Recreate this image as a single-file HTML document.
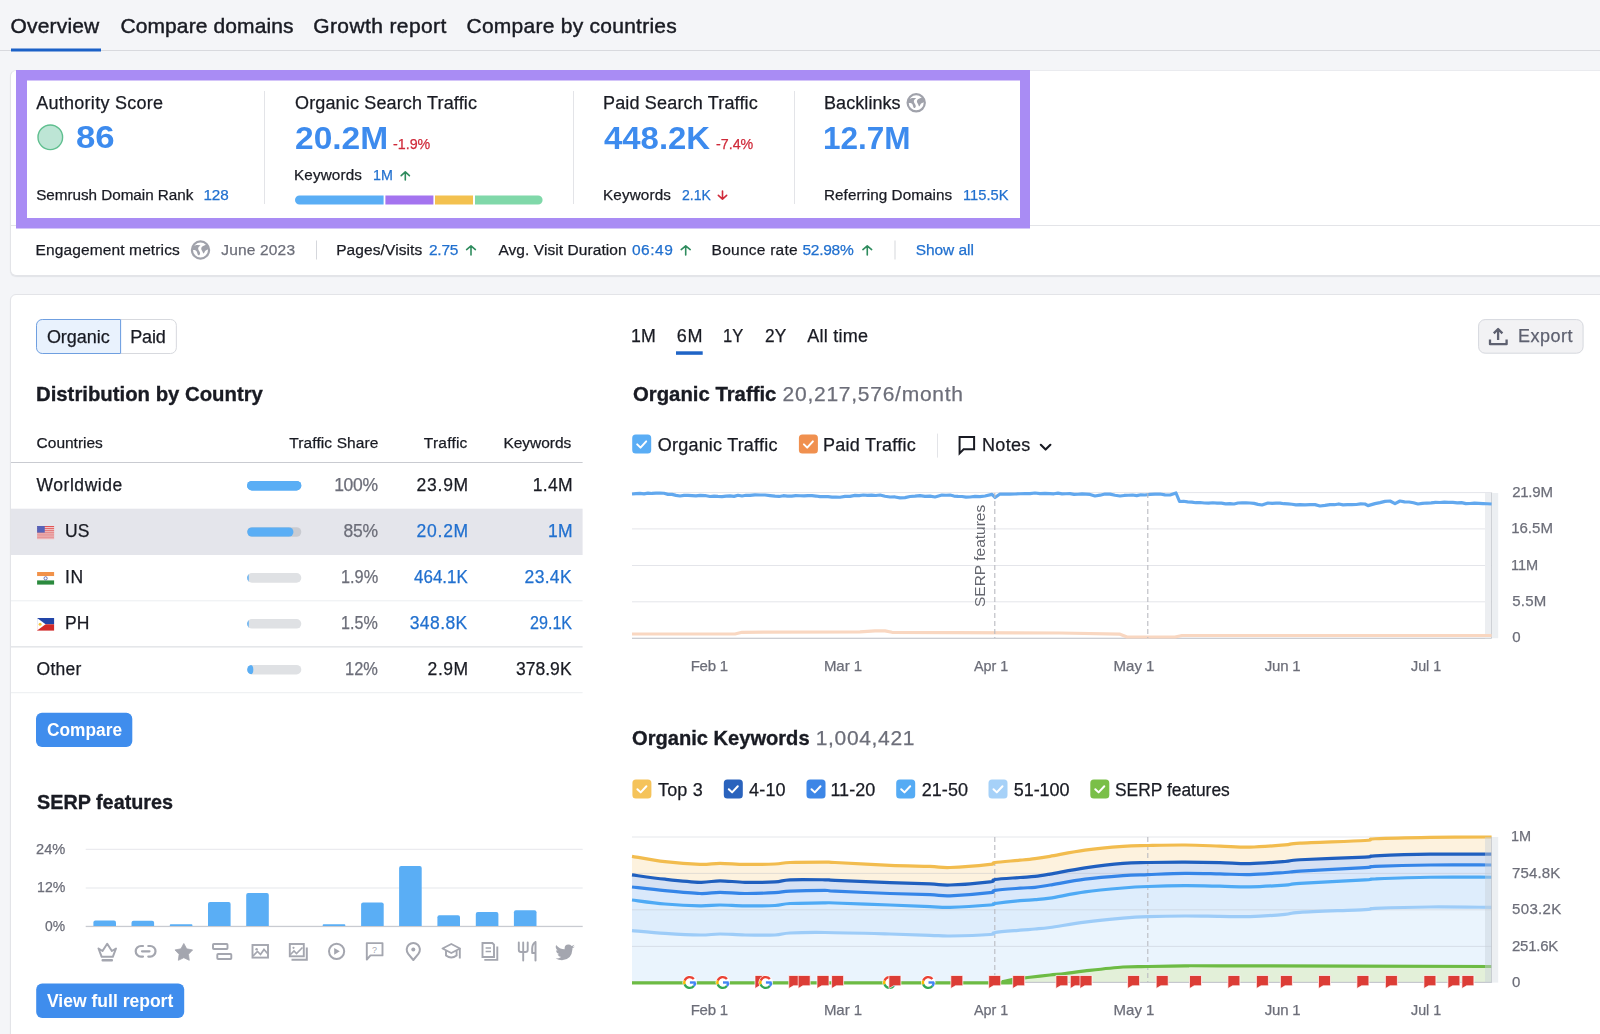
<!DOCTYPE html>
<html><head><meta charset="utf-8"><title>Semrush Domain Overview</title>
<style>
html,body{margin:0;padding:0;}
body{width:1600px;height:1034px;overflow:hidden;background:#f4f5f8;position:relative;font-family:"Liberation Sans",sans-serif;}
.card{position:absolute;background:#fff;border:1px solid #e3e4e8;box-shadow:0 1px 1px rgba(30,35,50,0.08);}
.g{position:absolute;left:0;top:0;}
.tl{position:absolute;left:0;top:0;width:1600px;height:1034px;will-change:transform;}
.t{position:absolute;white-space:pre;line-height:1;font-family:"Liberation Sans",sans-serif;}
</style></head><body>
<div class="card" style="left:10px;top:70px;width:1600px;height:204px;border-radius:6px;border-top-color:#eaebef;"></div>
<div class="card" style="left:10px;top:293.5px;width:1600px;height:800px;border-radius:6px;"></div>
<svg class=g width="1600" height="1034" viewBox="0 0 1600 1034"><rect x="0" y="50" width="1600" height="1" fill="#d8d9de"/><rect x="11" y="48.5" width="90" height="3" fill="#1b61c7"/><rect x="264" y="91" width="1" height="113" fill="#e3e4e8"/><rect x="573" y="91" width="1" height="113" fill="#e3e4e8"/><rect x="794" y="91" width="1" height="113" fill="#e3e4e8"/><rect x="11" y="225" width="1589" height="1" fill="#e3e4e8"/><path d="M16 70H1030V228.6H16Z M27 80.6V218H1020V80.6Z" fill="#a98cf4" fill-rule="evenodd"/><circle cx="50.3" cy="137.3" r="12.3" fill="#bde5d5" stroke="#5fbf8f" stroke-width="1.4"/><path d="M299.5 195.5H383.6V204.5H299.5A4.5 4.5 0 0 1 299.5 195.5Z" fill="#5aaef5"/><rect x="385.4" y="195.5" width="48" height="9" fill="#a474ef"/><rect x="435" y="195.5" width="38" height="9" fill="#f3c14f"/><path d="M475 195.5H538.1A4.5 4.5 0 0 1 538.1 204.5H475Z" fill="#80d8a9"/><path d="M405.3 180V171.8 M401.20000000000005 175.6L405.3 171.8L409.4 175.6" stroke="#2f8c5e" stroke-width="1.6" fill="none" stroke-linecap="round" stroke-linejoin="round"/><path d="M722.5 191V199.2 M718.35 195.4L722.5 199.2L726.65 195.4" stroke="#d02b3b" stroke-width="1.6" fill="none" stroke-linecap="round" stroke-linejoin="round"/><path d="M471.0 255V245.8 M466.6 249.6L471.0 245.8L475.4 249.6" stroke="#2f8c5e" stroke-width="1.6" fill="none" stroke-linecap="round" stroke-linejoin="round"/><path d="M685.7 255V245.8 M681.2 249.6L685.7 245.8L690.1999999999999 249.6" stroke="#2f8c5e" stroke-width="1.6" fill="none" stroke-linecap="round" stroke-linejoin="round"/><path d="M867.275 255V245.8 M862.9 249.6L867.275 245.8L871.65 249.6" stroke="#2f8c5e" stroke-width="1.6" fill="none" stroke-linecap="round" stroke-linejoin="round"/><g transform="translate(916.2 102.8) scale(1.0)"><circle r="8.6" fill="none" stroke="#a0a2ab" stroke-width="2.2"/><path d="M-8 -3.2C-6.5 -4.3 -4.5 -4.9 -3 -4.9L0 -4.8C-1.4 -3.6 -2.6 -2.4 -2.3 -1C-2 0.5 -0.2 2 -0.4 3.8C-0.6 5.1 -1.8 5.7 -2.5 5C-3.2 3.6 -3.3 1.6 -4.5 0.7C-5.6 -0.1 -7 0.1 -8.2 0.2Z M6.2 -5.6C4.6 -4.7 2.8 -4.3 1.8 -3.6C0.6 -2.7 0.5 -1.1 1.1 0C1.8 1.2 2.4 2.2 2.8 3.6C3.7 3.4 4.1 1.6 4.9 0.8C5.9 -0.1 7.2 -0.6 8.3 -0.9C8 -2.8 7.3 -4.4 6.2 -5.6Z" fill="#a0a2ab"/></g><g transform="translate(200.5 250) scale(1.0)"><circle r="8.6" fill="none" stroke="#a0a2ab" stroke-width="2.2"/><path d="M-8 -3.2C-6.5 -4.3 -4.5 -4.9 -3 -4.9L0 -4.8C-1.4 -3.6 -2.6 -2.4 -2.3 -1C-2 0.5 -0.2 2 -0.4 3.8C-0.6 5.1 -1.8 5.7 -2.5 5C-3.2 3.6 -3.3 1.6 -4.5 0.7C-5.6 -0.1 -7 0.1 -8.2 0.2Z M6.2 -5.6C4.6 -4.7 2.8 -4.3 1.8 -3.6C0.6 -2.7 0.5 -1.1 1.1 0C1.8 1.2 2.4 2.2 2.8 3.6C3.7 3.4 4.1 1.6 4.9 0.8C5.9 -0.1 7.2 -0.6 8.3 -0.9C8 -2.8 7.3 -4.4 6.2 -5.6Z" fill="#a0a2ab"/></g><rect x="316" y="240.5" width="1" height="19" fill="#d5d7dc"/><rect x="894.5" y="240.5" width="1" height="19" fill="#d5d7dc"/><path d="M42.25 319.5H120.6V353.5H42.25A5.75 5.75 0 0 1 36.5 347.75V325.25A5.75 5.75 0 0 1 42.25 319.5Z" fill="#e9f2fd" stroke="#6f9fe0" stroke-width="1"/><path d="M120.6 319.5H170.6A5.75 5.75 0 0 1 176.35 325.25V347.75A5.75 5.75 0 0 1 170.6 353.5H120.6" fill="#fff" stroke="#d7d9de" stroke-width="1"/><rect x="120.1" y="319.5" width="1" height="34" fill="#6f9fe0"/><rect x="11" y="462" width="571.6" height="1" fill="#c9cbd1"/><rect x="11" y="508.7" width="571.6" height="46.3" fill="#e4e5eb"/><rect x="11" y="600.3" width="571.6" height="1" fill="#eceef1"/><rect x="11" y="646.2" width="571.6" height="1.3" fill="#dfe1e5"/><rect x="11" y="692.2" width="571.6" height="1" fill="#eceef1"/><rect x="247.1" y="480.9" width="54.20000000000002" height="9.6" rx="4.8" fill="#5aaef5"/><rect x="247.1" y="480.9" width="54.20000000000002" height="9.6" rx="4.8" fill="#5aaef5"/><rect x="247.1" y="527.2" width="54.20000000000002" height="9.6" rx="4.8" fill="#c9cbd1"/><clipPath id="cb527"><rect x="247.1" y="527.2" width="54.20000000000002" height="9.6" rx="4.8"/></clipPath><rect clip-path="url(#cb527)" x="247.1" y="527.2" width="46.341000000000015" height="9.6" rx="4.8" fill="#5aaef5"/><rect x="247.1" y="573.1" width="54.20000000000002" height="9.6" rx="4.8" fill="#dfe1e4"/><clipPath id="cb573"><rect x="247.1" y="573.1" width="54.20000000000002" height="9.6" rx="4.8"/></clipPath><rect clip-path="url(#cb573)" x="247.1" y="573.1" width="1.6260000000000006" height="9.6" rx="4.8" fill="#5aaef5"/><rect x="247.1" y="619.0" width="54.20000000000002" height="9.6" rx="4.8" fill="#dfe1e4"/><clipPath id="cb619"><rect x="247.1" y="619.0" width="54.20000000000002" height="9.6" rx="4.8"/></clipPath><rect clip-path="url(#cb619)" x="247.1" y="619.0" width="1.6260000000000006" height="9.6" rx="4.8" fill="#5aaef5"/><rect x="247.1" y="664.9" width="54.20000000000002" height="9.6" rx="4.8" fill="#dfe1e4"/><clipPath id="cb664"><rect x="247.1" y="664.9" width="54.20000000000002" height="9.6" rx="4.8"/></clipPath><rect clip-path="url(#cb664)" x="247.1" y="664.9" width="6.233000000000002" height="9.6" rx="4.8" fill="#5aaef5"/><g transform="translate(37.1 526)"><rect x="0" y="0.00" width="17" height="0.96" fill="#e04a4a"/><rect x="0" y="0.96" width="17" height="0.96" fill="#f4cfcf"/><rect x="0" y="1.92" width="17" height="0.96" fill="#e04a4a"/><rect x="0" y="2.88" width="17" height="0.96" fill="#f4cfcf"/><rect x="0" y="3.85" width="17" height="0.96" fill="#e04a4a"/><rect x="0" y="4.81" width="17" height="0.96" fill="#f4cfcf"/><rect x="0" y="5.77" width="17" height="0.96" fill="#e04a4a"/><rect x="0" y="6.73" width="17" height="0.96" fill="#f4cfcf"/><rect x="0" y="7.69" width="17" height="0.96" fill="#e04a4a"/><rect x="0" y="8.65" width="17" height="0.96" fill="#f4cfcf"/><rect x="0" y="9.62" width="17" height="0.96" fill="#e04a4a"/><rect x="0" y="10.58" width="17" height="0.96" fill="#f4cfcf"/><rect x="0" y="11.54" width="17" height="0.96" fill="#e04a4a"/><rect x="0" y="12.50" width="17" height="0.96" fill="#f4cfcf"/><rect x="0" y="0" width="7.65" height="6.625" fill="#5662b8"/></g><g transform="translate(37.1 572)"><rect width="17" height="4.2" fill="#f1924a"/><rect y="4.2" width="17" height="4.2" fill="#ffffff"/><rect y="8.4" width="17" height="4.2" fill="#2b8a3e"/><circle cx="8.5" cy="6.3" r="1.6" fill="none" stroke="#4656a8" stroke-width="0.8"/></g><g transform="translate(37.1 618)"><rect width="17" height="6.3" fill="#2245a8"/><rect y="6.3" width="17" height="6.3" fill="#d12a2a"/><path d="M0 0L8.5 6.3L0 12.6Z" fill="#ffffff"/><circle cx="3" cy="6.3" r="1.5" fill="#f3c640"/></g><rect x="36" y="712.8" width="96.3" height="34.2" rx="6" fill="#3f8ded"/><rect x="36.2" y="983.4" width="148" height="34.6" rx="6" fill="#3f8ded"/><rect x="85.7" y="848.8" width="497" height="1" fill="#e6e7eb"/><rect x="85.7" y="887.5" width="497" height="1" fill="#e6e7eb"/><rect x="85.7" y="925.8" width="497" height="1.3" fill="#c9cbd1"/><path d="M93.4 926V922.6Q93.4 920.6 95.4 920.6H114.0Q116.0 920.6 116.0 922.6V926Z" fill="#5aaef5"/><path d="M131.5 926V922.8Q131.5 920.8 133.5 920.8H152.1Q154.1 920.8 154.1 922.8V926Z" fill="#5aaef5"/><path d="M169.8 926V925.15Q169.8 924.3 170.65000000000003 924.3H191.54999999999998Q192.4 924.3 192.4 925.15V926Z" fill="#5aaef5"/><path d="M208 926V904Q208 902 210 902H228.6Q230.6 902 230.6 904V926Z" fill="#5aaef5"/><path d="M246.2 926V894.9Q246.2 892.9 248.2 892.9H266.8Q268.8 892.9 268.8 894.9V926Z" fill="#5aaef5"/><path d="M322.7 926V925.15Q322.7 924.3 323.55 924.3H344.45Q345.3 924.3 345.3 925.15V926Z" fill="#5aaef5"/><path d="M361.1 926V904.5Q361.1 902.5 363.1 902.5H381.70000000000005Q383.70000000000005 902.5 383.70000000000005 904.5V926Z" fill="#5aaef5"/><path d="M399.1 926V867.9Q399.1 865.9 401.1 865.9H419.70000000000005Q421.70000000000005 865.9 421.70000000000005 867.9V926Z" fill="#5aaef5"/><path d="M437.4 926V917.2Q437.4 915.2 439.4 915.2H458.0Q460.0 915.2 460.0 917.2V926Z" fill="#5aaef5"/><path d="M475.8 926V914.1Q475.8 912.1 477.8 912.1H496.40000000000003Q498.40000000000003 912.1 498.40000000000003 914.1V926Z" fill="#5aaef5"/><path d="M513.9 926V912.3Q513.9 910.3 515.9 910.3H534.5Q536.5 910.3 536.5 912.3V926Z" fill="#5aaef5"/><path d="M98.5 948.5L102.5 951L107.2 943.8L111.9 951L116 948.5L112.8 956.8H101.7Z" fill="none" stroke="#a4a6af" stroke-width="2" stroke-linejoin="round"/><rect x="101.5" y="959" width="11.5" height="2.5" rx="1" fill="#a4a6af"/><path d="M143 946H141A5.3 5.3 0 0 0 141 956.6H143 M148.3 946H150.2A5.3 5.3 0 0 1 150.2 956.6H148.3 M142 951.3H149.5" fill="none" stroke="#a4a6af" stroke-width="2.2" stroke-linecap="round"/><polygon points="183.80,943.50 186.68,948.84 192.64,949.93 188.46,954.31 189.27,960.32 183.80,957.70 178.33,960.32 179.14,954.31 174.96,949.93 180.92,948.84" fill="#a4a6af" stroke="#a4a6af" stroke-width="0.8" stroke-linejoin="round"/><rect x="213" y="944" width="14.5" height="5" rx="0.8" fill="none" stroke="#a4a6af" stroke-width="1.9"/><rect x="217.3" y="954" width="14" height="5" rx="0.8" fill="none" stroke="#a4a6af" stroke-width="1.9"/><rect x="252.5" y="945" width="15.5" height="12.6" fill="none" stroke="#a4a6af" stroke-width="1.9"/><circle cx="256.6" cy="949.2" r="1.2" fill="#a4a6af"/><path d="M253 956L257.5 951.5L260.5 954.5L264 949.5L267.5 953.5" fill="none" stroke="#a4a6af" stroke-width="1.7"/><rect x="289.8" y="944" width="14" height="12.3" fill="none" stroke="#a4a6af" stroke-width="1.9"/><circle cx="293.5" cy="947.8" r="1.1" fill="#a4a6af"/><path d="M290 955L294 951L296.5 953.5L302.5 947.5" fill="none" stroke="#a4a6af" stroke-width="1.6"/><path d="M291.5 959.8H306.8V947.5" fill="none" stroke="#a4a6af" stroke-width="2"/><circle cx="336.6" cy="951.3" r="7.6" fill="none" stroke="#a4a6af" stroke-width="2"/><path d="M334.2 947.9V954.7L339.8 951.3Z" fill="#a4a6af"/><path d="M366.8 959.5V943.1H382.5V955.4H370.5Z" fill="none" stroke="#a4a6af" stroke-width="1.9" stroke-linejoin="round"/><text x="374.6" y="953" font-size="9" font-family="Liberation Sans" fill="#a4a6af" text-anchor="middle">?</text><path d="M413.3 960L408.2 953.8A6.6 6.6 0 1 1 418.4 953.8Z" fill="none" stroke="#a4a6af" stroke-width="2" stroke-linejoin="round"/><circle cx="413.3" cy="949.6" r="2" fill="#a4a6af"/><path d="M442.5 948.5L451.3 944L460 948.5L451.3 953Z" fill="none" stroke="#a4a6af" stroke-width="1.9" stroke-linejoin="round"/><path d="M446 950.5V955.5Q451.3 959.5 456.6 955.5V950.5 M459.8 948.8V958.5" fill="none" stroke="#a4a6af" stroke-width="1.9"/><path d="M482.5 943H492.3L494 944.7V957H482.5Z" fill="none" stroke="#a4a6af" stroke-width="1.9"/><path d="M485.6 948H491 M485.6 951.5H491" stroke="#a4a6af" stroke-width="1.6"/><path d="M484.3 959.9H497.3V946.5" fill="none" stroke="#a4a6af" stroke-width="1.9"/><path d="M518.8 942.5V950Q518.8 952 521 952H525.5Q527.7 952 527.7 950V942.5 M523.2 942.5V960.5" fill="none" stroke="#a4a6af" stroke-width="1.9" stroke-linecap="round"/><path d="M535.5 942V960.5 M535.5 942Q532.2 944 532.2 948.5V953H535.5" fill="none" stroke="#a4a6af" stroke-width="2" stroke-linecap="round" stroke-linejoin="round"/><path d="M575 946.5Q573.8 947.1 572.5 947.2Q573.9 946.3 574.4 944.8Q573.1 945.6 571.6 945.9Q570.3 944.5 568.4 944.5Q564.6 944.6 564.6 948.4L564.7 949.3Q559.4 949 556.1 944.9Q554.9 947.9 557.6 950.6Q556.8 950.6 556.1 950.2Q556.2 953.2 559.2 954.1Q558.4 954.4 557.5 954.2Q558.5 956.7 561.1 956.9Q558.8 958.6 555.6 958.5Q558.6 960.3 562 960.3Q571.7 960 572.4 949.6V948.3Q573.9 947.6 575 946.5Z" fill="#a4a6af"/><rect x="676" y="351.3" width="26.7" height="3.5" fill="#1f64c6"/><rect x="1478.6" y="319.6" width="104.5" height="33.6" rx="6.5" fill="#f2f2f4" stroke="#d6d8de" stroke-width="1"/><path d="M1498.1 340V328.6 M1493.8 333.4L1498.1 329L1502.4 333.4 M1490 339.6V344.2H1506.6V339.6" fill="none" stroke="#5e6170" stroke-width="2.3" stroke-linejoin="round"/><rect x="632.2" y="434.6" width="19" height="19" rx="3.5" fill="#5aadf5"/><path d="M637.2 444.40000000000003L640.5 447.6L646.2 441.40000000000003" fill="none" stroke="#ffffff" stroke-width="2" stroke-linecap="round" stroke-linejoin="round"/><rect x="798.9" y="434.6" width="19" height="19" rx="3.5" fill="#f0904f"/><path d="M803.9 444.40000000000003L807.1999999999999 447.6L812.9 441.40000000000003" fill="none" stroke="#ffffff" stroke-width="2" stroke-linecap="round" stroke-linejoin="round"/><rect x="937" y="433.6" width="1" height="24" fill="#e3e4e8"/><path d="M959.6 453.4V437H974.1V449.3H963.6Z" fill="none" stroke="#191b23" stroke-width="2" stroke-linejoin="miter"/><path d="M1040.8 444.8L1045.6 449.6L1050.4 444.8" fill="none" stroke="#191b23" stroke-width="2.1" stroke-linecap="round" stroke-linejoin="round"/><rect x="632.4" y="779.4" width="19" height="19" rx="3.5" fill="#f5c35a"/><path d="M637.4 789.1999999999999L640.6999999999999 792.4L646.4 786.1999999999999" fill="none" stroke="#ffffff" stroke-width="2" stroke-linecap="round" stroke-linejoin="round"/><rect x="723.8" y="779.4" width="19" height="19" rx="3.5" fill="#2a63bd"/><path d="M728.8 789.1999999999999L732.0999999999999 792.4L737.8 786.1999999999999" fill="none" stroke="#ffffff" stroke-width="2" stroke-linecap="round" stroke-linejoin="round"/><rect x="806.5" y="779.4" width="19" height="19" rx="3.5" fill="#3d86e6"/><path d="M811.5 789.1999999999999L814.8 792.4L820.5 786.1999999999999" fill="none" stroke="#ffffff" stroke-width="2" stroke-linecap="round" stroke-linejoin="round"/><rect x="896.2" y="779.4" width="19" height="19" rx="3.5" fill="#55abf4"/><path d="M901.2 789.1999999999999L904.5 792.4L910.2 786.1999999999999" fill="none" stroke="#ffffff" stroke-width="2" stroke-linecap="round" stroke-linejoin="round"/><rect x="988.5" y="779.4" width="19" height="19" rx="3.5" fill="#a6d1f8"/><path d="M993.5 789.1999999999999L996.8 792.4L1002.5 786.1999999999999" fill="none" stroke="#ffffff" stroke-width="2" stroke-linecap="round" stroke-linejoin="round"/><rect x="1090.3" y="779.4" width="19" height="19" rx="3.5" fill="#7abf48"/><path d="M1095.3 789.1999999999999L1098.6 792.4L1104.3 786.1999999999999" fill="none" stroke="#ffffff" stroke-width="2" stroke-linecap="round" stroke-linejoin="round"/><rect x="632" y="492.1" width="859.5999999999999" height="1" fill="#e4e5ea"/><rect x="632" y="528.4" width="859.5999999999999" height="1" fill="#e4e5ea"/><rect x="632" y="565.0" width="859.5999999999999" height="1" fill="#e4e5ea"/><rect x="632" y="601.3" width="859.5999999999999" height="1" fill="#e4e5ea"/><rect x="632" y="637.7" width="859.5999999999999" height="1.2" fill="#c6c8ce"/><rect x="1485" y="493" width="6.2" height="145.2" fill="#eceef1"/><rect x="1491.2" y="492.6" width="1" height="145.6" fill="#c3c6cc"/><rect x="1492.2" y="493" width="6" height="145.2" fill="#eceff2"/><polyline points="632.0,494.00 636.0,493.69 640.0,493.39 644.0,493.82 648.0,493.07 652.0,493.47 656.0,493.17 660.0,493.20 664.0,493.27 668.0,494.33 672.0,494.37 676.0,495.37 680.0,496.00 684.0,495.41 688.0,495.31 692.0,495.56 696.0,495.88 700.0,495.40 705.0,495.54 710.0,496.50 714.0,496.09 718.0,496.42 722.0,496.66 726.0,496.14 730.0,495.84 734.0,496.36 738.0,495.23 742.0,496.01 746.0,495.28 750.0,495.40 755.0,494.81 760.0,495.00 765.0,494.98 770.0,495.59 775.0,496.20 779.2,496.47 783.3,495.70 787.5,496.06 791.7,496.05 795.8,495.68 800.0,495.75 804.0,495.95 808.0,495.57 812.0,495.72 816.0,496.03 820.0,496.70 824.0,496.57 828.0,496.60 832.0,497.04 836.0,497.05 840.0,497.25 845.0,496.41 850.0,496.34 855.0,495.40 859.2,495.55 863.3,494.99 867.5,495.28 871.7,495.16 875.8,495.48 880.0,495.00 885.0,496.25 890.0,497.00 895.0,496.97 900.0,497.93 905.0,497.60 910.0,496.51 915.0,496.18 920.0,495.60 925.0,496.35 930.0,496.15 935.0,497.00 942.0,495.00 946.0,495.27 950.0,495.06 954.0,496.04 958.0,496.43 962.0,496.51 966.0,497.13 970.0,497.00 975.0,496.46 980.0,496.55 985.0,496.00 992.0,494.40 995.0,497.50 1000.0,494.00 1005.0,494.10 1010.0,494.09 1015.0,494.00 1020.0,493.75 1025.0,493.60 1030.0,493.67 1035.0,493.00 1040.0,493.69 1045.0,493.37 1050.0,493.60 1054.0,493.78 1058.0,493.12 1062.0,493.82 1066.0,493.76 1070.0,493.60 1074.0,494.30 1078.0,494.27 1082.0,493.84 1086.0,494.11 1090.0,494.40 1095.0,496.00 1100.0,495.19 1105.0,494.00 1110.0,494.14 1115.0,495.29 1120.0,496.00 1124.2,495.47 1128.3,495.25 1132.5,495.01 1136.7,495.63 1140.8,494.76 1145.0,495.00 1150.0,494.39 1155.0,494.21 1160.0,494.00 1165.0,494.91 1170.0,495.00 1176.0,493.00 1179.5,501.50 1183.6,501.24 1187.7,501.84 1191.8,502.15 1195.9,502.72 1200.0,502.50 1204.3,503.01 1208.6,503.21 1212.9,502.73 1217.1,503.04 1221.4,503.13 1225.7,503.87 1230.0,503.60 1234.0,503.98 1238.0,502.98 1242.0,502.88 1246.0,502.83 1250.0,503.00 1254.0,503.37 1258.0,504.32 1262.0,505.00 1268.0,503.00 1272.0,503.30 1276.0,503.14 1280.0,503.05 1284.0,503.71 1288.0,503.86 1292.0,504.27 1296.0,504.90 1300.0,504.60 1305.0,504.81 1310.0,504.62 1315.0,504.60 1320.0,506.00 1325.0,505.43 1330.0,504.60 1334.4,504.72 1338.8,503.96 1343.1,504.81 1347.5,504.61 1351.9,504.64 1356.2,504.48 1360.6,503.96 1365.0,504.00 1368.0,505.60 1375.0,503.60 1380.0,502.62 1385.0,501.43 1390.0,501.00 1395.0,503.60 1400.0,501.00 1404.5,501.90 1409.0,502.02 1413.5,502.77 1418.0,504.00 1422.4,503.38 1426.8,503.03 1431.2,502.92 1435.6,502.31 1440.0,502.50 1444.3,502.08 1448.6,502.37 1452.9,502.44 1457.2,502.85 1461.5,502.60 1465.8,503.66 1470.1,503.50 1474.4,503.11 1478.7,503.35 1483.0,503.58 1487.3,503.73 1491.6,504.00" fill="none" stroke="#62a8ee" stroke-width="3.2" stroke-linejoin="round"/><polyline points="632.0,634.00 735.0,634.00 742.0,632.30 860.0,631.80 875.0,630.80 885.0,630.90 892.0,632.30 1060.0,633.00 1120.0,634.20 1127.0,637.00 1175.0,637.00 1182.0,635.50 1491.6,635.50" fill="none" stroke="#f9d7c1" stroke-width="3.2" stroke-linejoin="round"/><line x1="994.8" y1="493" x2="994.8" y2="638" stroke="#b9bbc1" stroke-width="1.1" stroke-dasharray="5 3"/><line x1="1147.8" y1="493" x2="1147.8" y2="638" stroke="#b9bbc1" stroke-width="1.1" stroke-dasharray="5 3"/><path d="M632.00 856.30C637.50 857.20 653.67 860.35 665.00 861.70C676.33 863.05 690.83 864.13 700.00 864.40C709.17 864.67 712.50 863.30 720.00 863.30C727.50 863.30 735.83 864.28 745.00 864.40C754.17 864.52 767.50 864.32 775.00 864.00C782.50 863.68 781.67 862.80 790.00 862.50C798.33 862.20 817.50 862.20 825.00 862.20C832.50 862.20 824.17 861.98 835.00 862.50C845.83 863.02 874.17 864.65 890.00 865.30C905.83 865.95 920.00 866.03 930.00 866.40C940.00 866.77 940.00 867.83 950.00 867.50C960.00 867.17 982.50 865.23 990.00 864.40C997.50 863.57 990.00 863.20 995.00 862.50C1000.00 861.80 1013.33 860.85 1020.00 860.20C1026.67 859.55 1030.00 859.25 1035.00 858.60C1040.00 857.95 1041.67 857.72 1050.00 856.30C1058.33 854.88 1072.83 851.77 1085.00 850.10C1097.17 848.43 1112.50 847.07 1123.00 846.30C1133.50 845.53 1137.67 845.72 1148.00 845.50C1158.33 845.28 1173.00 844.90 1185.00 845.00C1197.00 845.10 1209.17 845.73 1220.00 846.10C1230.83 846.47 1239.17 847.40 1250.00 847.20C1260.83 847.00 1276.67 845.58 1285.00 844.90C1293.33 844.22 1286.67 843.83 1300.00 843.10C1313.33 842.37 1352.50 841.23 1365.00 840.50C1377.50 839.77 1364.17 839.27 1375.00 838.75C1385.83 838.23 1410.57 837.64 1430.00 837.35C1449.43 837.06 1481.33 837.06 1491.60 837.00L1491.6 982.8L632 982.8Z" fill="#fdf2de"/><path d="M632.00 874.90C637.50 875.62 653.67 877.97 665.00 879.20C676.33 880.43 690.83 882.03 700.00 882.30C709.17 882.57 712.50 880.80 720.00 880.80C727.50 880.80 735.83 882.12 745.00 882.30C754.17 882.48 767.50 882.32 775.00 881.90C782.50 881.48 781.67 880.15 790.00 879.80C798.33 879.45 817.50 879.72 825.00 879.80C832.50 879.88 824.17 879.83 835.00 880.30C845.83 880.77 874.17 882.00 890.00 882.60C905.83 883.20 920.00 883.50 930.00 883.90C940.00 884.30 940.00 885.33 950.00 885.00C960.00 884.67 982.50 882.82 990.00 881.90C997.50 880.98 990.00 880.23 995.00 879.50C1000.00 878.77 1013.33 878.02 1020.00 877.50C1026.67 876.98 1030.00 876.97 1035.00 876.40C1040.00 875.83 1041.67 875.52 1050.00 874.10C1058.33 872.68 1072.83 869.70 1085.00 867.90C1097.17 866.10 1112.50 864.20 1123.00 863.30C1133.50 862.40 1137.67 862.68 1148.00 862.50C1158.33 862.32 1173.00 862.18 1185.00 862.20C1197.00 862.22 1209.17 862.37 1220.00 862.60C1230.83 862.83 1239.17 863.78 1250.00 863.60C1260.83 863.42 1276.67 862.14 1285.00 861.50C1293.33 860.86 1286.67 860.48 1300.00 859.75C1313.33 859.02 1352.50 857.74 1365.00 857.10C1377.50 856.46 1364.17 856.39 1375.00 855.90C1385.83 855.41 1410.57 854.44 1430.00 854.15C1449.43 853.86 1481.33 854.15 1491.60 854.15L1491.6 982.8L632 982.8Z" fill="#d6e1f3"/><path d="M632.00 887.00C637.50 887.62 653.67 889.62 665.00 890.70C676.33 891.78 690.83 893.22 700.00 893.50C709.17 893.78 712.50 892.40 720.00 892.40C727.50 892.40 735.83 893.45 745.00 893.50C754.17 893.55 767.50 893.10 775.00 892.70C782.50 892.30 781.67 891.48 790.00 891.10C798.33 890.72 817.50 890.40 825.00 890.40C832.50 890.40 824.17 890.58 835.00 891.10C845.83 891.62 874.17 892.90 890.00 893.50C905.83 894.10 920.00 894.32 930.00 894.70C940.00 895.08 940.00 896.13 950.00 895.80C960.00 895.47 982.50 893.60 990.00 892.70C997.50 891.80 990.00 891.15 995.00 890.40C1000.00 889.65 1013.33 888.72 1020.00 888.20C1026.67 887.68 1030.00 887.83 1035.00 887.30C1040.00 886.77 1041.67 886.35 1050.00 885.00C1058.33 883.65 1072.83 880.75 1085.00 879.20C1097.17 877.65 1112.50 876.47 1123.00 875.70C1133.50 874.93 1137.67 875.00 1148.00 874.60C1158.33 874.20 1173.00 873.42 1185.00 873.30C1197.00 873.18 1209.17 873.68 1220.00 873.90C1230.83 874.12 1239.17 874.83 1250.00 874.60C1260.83 874.37 1276.67 873.08 1285.00 872.50C1293.33 871.92 1286.67 871.92 1300.00 871.10C1313.33 870.28 1352.50 868.38 1365.00 867.60C1377.50 866.82 1364.17 866.83 1375.00 866.40C1385.83 865.97 1410.57 865.23 1430.00 865.00C1449.43 864.77 1481.33 865.00 1491.60 865.00L1491.6 982.8L632 982.8Z" fill="#d9e8fb"/><path d="M632.00 900.00C637.50 900.67 653.67 903.02 665.00 904.00C676.33 904.98 690.83 905.73 700.00 905.90C709.17 906.07 712.50 905.00 720.00 905.00C727.50 905.00 735.83 905.82 745.00 905.90C754.17 905.98 767.50 905.90 775.00 905.50C782.50 905.10 781.67 903.95 790.00 903.50C798.33 903.05 817.50 902.88 825.00 902.80C832.50 902.72 824.17 902.63 835.00 903.00C845.83 903.37 874.17 904.40 890.00 905.00C905.83 905.60 920.00 906.20 930.00 906.60C940.00 907.00 940.00 907.67 950.00 907.40C960.00 907.13 982.50 905.65 990.00 905.00C997.50 904.35 990.00 904.23 995.00 903.50C1000.00 902.77 1013.33 901.23 1020.00 900.60C1026.67 899.97 1030.00 900.12 1035.00 899.70C1040.00 899.28 1041.67 899.40 1050.00 898.10C1058.33 896.80 1072.83 893.58 1085.00 891.90C1097.17 890.22 1112.50 888.90 1123.00 888.00C1133.50 887.10 1137.67 886.88 1148.00 886.50C1158.33 886.12 1173.00 885.75 1185.00 885.70C1197.00 885.65 1209.17 886.00 1220.00 886.20C1230.83 886.40 1239.17 887.08 1250.00 886.90C1260.83 886.72 1276.67 885.68 1285.00 885.10C1293.33 884.52 1286.67 884.27 1300.00 883.40C1313.33 882.53 1352.50 880.63 1365.00 879.90C1377.50 879.17 1364.17 879.44 1375.00 879.00C1385.83 878.56 1410.57 877.54 1430.00 877.25C1449.43 876.96 1481.33 877.25 1491.60 877.25L1491.6 982.8L632 982.8Z" fill="#deedfc"/><path d="M632.00 930.60C637.50 931.07 653.67 932.67 665.00 933.40C676.33 934.13 690.83 934.90 700.00 935.00C709.17 935.10 712.50 934.00 720.00 934.00C727.50 934.00 735.83 934.83 745.00 935.00C754.17 935.17 767.50 935.33 775.00 935.00C782.50 934.67 781.67 933.42 790.00 933.00C798.33 932.58 808.33 932.33 825.00 932.50C841.67 932.67 872.50 933.53 890.00 934.00C907.50 934.47 920.00 934.97 930.00 935.30C940.00 935.63 940.00 936.13 950.00 936.00C960.00 935.87 982.50 935.08 990.00 934.50C997.50 933.92 990.00 933.22 995.00 932.50C1000.00 931.78 1013.33 930.78 1020.00 930.20C1026.67 929.62 1030.00 929.45 1035.00 929.00C1040.00 928.55 1041.67 928.65 1050.00 927.50C1058.33 926.35 1072.83 923.65 1085.00 922.10C1097.17 920.55 1112.50 919.10 1123.00 918.20C1133.50 917.30 1137.67 917.07 1148.00 916.70C1158.33 916.33 1173.00 916.05 1185.00 916.00C1197.00 915.95 1209.17 916.30 1220.00 916.40C1230.83 916.50 1239.17 916.93 1250.00 916.60C1260.83 916.27 1276.67 915.12 1285.00 914.40C1293.33 913.68 1286.67 913.10 1300.00 912.30C1313.33 911.50 1352.50 910.25 1365.00 909.60C1377.50 908.95 1364.17 908.83 1375.00 908.40C1385.83 907.97 1410.57 907.17 1430.00 907.00C1449.43 906.83 1481.33 907.29 1491.60 907.35L1491.6 982.8L632 982.8Z" fill="#eaf4fd"/><path d="M632.00 982.80C691.67 982.80 928.17 983.02 990.00 982.80C1051.83 982.58 998.83 982.13 1003.00 981.50C1007.17 980.87 1010.50 979.71 1015.00 979.00C1019.50 978.29 1024.17 977.92 1030.00 977.25C1035.83 976.58 1044.17 975.62 1050.00 975.00C1055.83 974.38 1059.17 974.18 1065.00 973.50C1070.83 972.82 1075.33 971.98 1085.00 970.90C1094.67 969.82 1112.50 967.73 1123.00 967.00C1133.50 966.27 1137.67 966.68 1148.00 966.50C1158.33 966.32 1173.00 966.02 1185.00 965.90C1197.00 965.78 1168.90 965.70 1220.00 965.80C1271.10 965.90 1446.33 966.38 1491.60 966.50L1491.6 982.8L632 982.8Z" fill="#e3f0d9"/><rect x="632" y="836.5" width="859.5999999999999" height="1" fill="#b4b8c4" opacity="0.35"/><rect x="632" y="872.9" width="859.5999999999999" height="1" fill="#b4b8c4" opacity="0.35"/><rect x="632" y="909.3" width="859.5999999999999" height="1" fill="#b4b8c4" opacity="0.35"/><rect x="632" y="945.9" width="859.5999999999999" height="1" fill="#b4b8c4" opacity="0.35"/><rect x="632" y="981.8" width="859.5999999999999" height="1.2" fill="#c6c8ce"/><line x1="994.8" y1="837" x2="994.8" y2="982" stroke="#b9bbc1" stroke-width="1.1" stroke-dasharray="5 3"/><line x1="1147.8" y1="837" x2="1147.8" y2="982" stroke="#b9bbc1" stroke-width="1.1" stroke-dasharray="5 3"/><path d="M632.00 856.30C637.50 857.20 653.67 860.35 665.00 861.70C676.33 863.05 690.83 864.13 700.00 864.40C709.17 864.67 712.50 863.30 720.00 863.30C727.50 863.30 735.83 864.28 745.00 864.40C754.17 864.52 767.50 864.32 775.00 864.00C782.50 863.68 781.67 862.80 790.00 862.50C798.33 862.20 817.50 862.20 825.00 862.20C832.50 862.20 824.17 861.98 835.00 862.50C845.83 863.02 874.17 864.65 890.00 865.30C905.83 865.95 920.00 866.03 930.00 866.40C940.00 866.77 940.00 867.83 950.00 867.50C960.00 867.17 982.50 865.23 990.00 864.40C997.50 863.57 990.00 863.20 995.00 862.50C1000.00 861.80 1013.33 860.85 1020.00 860.20C1026.67 859.55 1030.00 859.25 1035.00 858.60C1040.00 857.95 1041.67 857.72 1050.00 856.30C1058.33 854.88 1072.83 851.77 1085.00 850.10C1097.17 848.43 1112.50 847.07 1123.00 846.30C1133.50 845.53 1137.67 845.72 1148.00 845.50C1158.33 845.28 1173.00 844.90 1185.00 845.00C1197.00 845.10 1209.17 845.73 1220.00 846.10C1230.83 846.47 1239.17 847.40 1250.00 847.20C1260.83 847.00 1276.67 845.58 1285.00 844.90C1293.33 844.22 1286.67 843.83 1300.00 843.10C1313.33 842.37 1352.50 841.23 1365.00 840.50C1377.50 839.77 1364.17 839.27 1375.00 838.75C1385.83 838.23 1410.57 837.64 1430.00 837.35C1449.43 837.06 1481.33 837.06 1491.60 837.00" fill="none" stroke="#f2bc4e" stroke-width="3.2" stroke-linejoin="round"/><path d="M632.00 874.90C637.50 875.62 653.67 877.97 665.00 879.20C676.33 880.43 690.83 882.03 700.00 882.30C709.17 882.57 712.50 880.80 720.00 880.80C727.50 880.80 735.83 882.12 745.00 882.30C754.17 882.48 767.50 882.32 775.00 881.90C782.50 881.48 781.67 880.15 790.00 879.80C798.33 879.45 817.50 879.72 825.00 879.80C832.50 879.88 824.17 879.83 835.00 880.30C845.83 880.77 874.17 882.00 890.00 882.60C905.83 883.20 920.00 883.50 930.00 883.90C940.00 884.30 940.00 885.33 950.00 885.00C960.00 884.67 982.50 882.82 990.00 881.90C997.50 880.98 990.00 880.23 995.00 879.50C1000.00 878.77 1013.33 878.02 1020.00 877.50C1026.67 876.98 1030.00 876.97 1035.00 876.40C1040.00 875.83 1041.67 875.52 1050.00 874.10C1058.33 872.68 1072.83 869.70 1085.00 867.90C1097.17 866.10 1112.50 864.20 1123.00 863.30C1133.50 862.40 1137.67 862.68 1148.00 862.50C1158.33 862.32 1173.00 862.18 1185.00 862.20C1197.00 862.22 1209.17 862.37 1220.00 862.60C1230.83 862.83 1239.17 863.78 1250.00 863.60C1260.83 863.42 1276.67 862.14 1285.00 861.50C1293.33 860.86 1286.67 860.48 1300.00 859.75C1313.33 859.02 1352.50 857.74 1365.00 857.10C1377.50 856.46 1364.17 856.39 1375.00 855.90C1385.83 855.41 1410.57 854.44 1430.00 854.15C1449.43 853.86 1481.33 854.15 1491.60 854.15" fill="none" stroke="#1f5fbf" stroke-width="3.2" stroke-linejoin="round"/><path d="M632.00 887.00C637.50 887.62 653.67 889.62 665.00 890.70C676.33 891.78 690.83 893.22 700.00 893.50C709.17 893.78 712.50 892.40 720.00 892.40C727.50 892.40 735.83 893.45 745.00 893.50C754.17 893.55 767.50 893.10 775.00 892.70C782.50 892.30 781.67 891.48 790.00 891.10C798.33 890.72 817.50 890.40 825.00 890.40C832.50 890.40 824.17 890.58 835.00 891.10C845.83 891.62 874.17 892.90 890.00 893.50C905.83 894.10 920.00 894.32 930.00 894.70C940.00 895.08 940.00 896.13 950.00 895.80C960.00 895.47 982.50 893.60 990.00 892.70C997.50 891.80 990.00 891.15 995.00 890.40C1000.00 889.65 1013.33 888.72 1020.00 888.20C1026.67 887.68 1030.00 887.83 1035.00 887.30C1040.00 886.77 1041.67 886.35 1050.00 885.00C1058.33 883.65 1072.83 880.75 1085.00 879.20C1097.17 877.65 1112.50 876.47 1123.00 875.70C1133.50 874.93 1137.67 875.00 1148.00 874.60C1158.33 874.20 1173.00 873.42 1185.00 873.30C1197.00 873.18 1209.17 873.68 1220.00 873.90C1230.83 874.12 1239.17 874.83 1250.00 874.60C1260.83 874.37 1276.67 873.08 1285.00 872.50C1293.33 871.92 1286.67 871.92 1300.00 871.10C1313.33 870.28 1352.50 868.38 1365.00 867.60C1377.50 866.82 1364.17 866.83 1375.00 866.40C1385.83 865.97 1410.57 865.23 1430.00 865.00C1449.43 864.77 1481.33 865.00 1491.60 865.00" fill="none" stroke="#3585e8" stroke-width="3.2" stroke-linejoin="round"/><path d="M632.00 900.00C637.50 900.67 653.67 903.02 665.00 904.00C676.33 904.98 690.83 905.73 700.00 905.90C709.17 906.07 712.50 905.00 720.00 905.00C727.50 905.00 735.83 905.82 745.00 905.90C754.17 905.98 767.50 905.90 775.00 905.50C782.50 905.10 781.67 903.95 790.00 903.50C798.33 903.05 817.50 902.88 825.00 902.80C832.50 902.72 824.17 902.63 835.00 903.00C845.83 903.37 874.17 904.40 890.00 905.00C905.83 905.60 920.00 906.20 930.00 906.60C940.00 907.00 940.00 907.67 950.00 907.40C960.00 907.13 982.50 905.65 990.00 905.00C997.50 904.35 990.00 904.23 995.00 903.50C1000.00 902.77 1013.33 901.23 1020.00 900.60C1026.67 899.97 1030.00 900.12 1035.00 899.70C1040.00 899.28 1041.67 899.40 1050.00 898.10C1058.33 896.80 1072.83 893.58 1085.00 891.90C1097.17 890.22 1112.50 888.90 1123.00 888.00C1133.50 887.10 1137.67 886.88 1148.00 886.50C1158.33 886.12 1173.00 885.75 1185.00 885.70C1197.00 885.65 1209.17 886.00 1220.00 886.20C1230.83 886.40 1239.17 887.08 1250.00 886.90C1260.83 886.72 1276.67 885.68 1285.00 885.10C1293.33 884.52 1286.67 884.27 1300.00 883.40C1313.33 882.53 1352.50 880.63 1365.00 879.90C1377.50 879.17 1364.17 879.44 1375.00 879.00C1385.83 878.56 1410.57 877.54 1430.00 877.25C1449.43 876.96 1481.33 877.25 1491.60 877.25" fill="none" stroke="#4eaaf5" stroke-width="3.2" stroke-linejoin="round"/><path d="M632.00 930.60C637.50 931.07 653.67 932.67 665.00 933.40C676.33 934.13 690.83 934.90 700.00 935.00C709.17 935.10 712.50 934.00 720.00 934.00C727.50 934.00 735.83 934.83 745.00 935.00C754.17 935.17 767.50 935.33 775.00 935.00C782.50 934.67 781.67 933.42 790.00 933.00C798.33 932.58 808.33 932.33 825.00 932.50C841.67 932.67 872.50 933.53 890.00 934.00C907.50 934.47 920.00 934.97 930.00 935.30C940.00 935.63 940.00 936.13 950.00 936.00C960.00 935.87 982.50 935.08 990.00 934.50C997.50 933.92 990.00 933.22 995.00 932.50C1000.00 931.78 1013.33 930.78 1020.00 930.20C1026.67 929.62 1030.00 929.45 1035.00 929.00C1040.00 928.55 1041.67 928.65 1050.00 927.50C1058.33 926.35 1072.83 923.65 1085.00 922.10C1097.17 920.55 1112.50 919.10 1123.00 918.20C1133.50 917.30 1137.67 917.07 1148.00 916.70C1158.33 916.33 1173.00 916.05 1185.00 916.00C1197.00 915.95 1209.17 916.30 1220.00 916.40C1230.83 916.50 1239.17 916.93 1250.00 916.60C1260.83 916.27 1276.67 915.12 1285.00 914.40C1293.33 913.68 1286.67 913.10 1300.00 912.30C1313.33 911.50 1352.50 910.25 1365.00 909.60C1377.50 908.95 1364.17 908.83 1375.00 908.40C1385.83 907.97 1410.57 907.17 1430.00 907.00C1449.43 906.83 1481.33 907.29 1491.60 907.35" fill="none" stroke="#9dccf8" stroke-width="3.2" stroke-linejoin="round"/><path d="M632.00 982.80C691.67 982.80 928.17 983.02 990.00 982.80C1051.83 982.58 998.83 982.13 1003.00 981.50C1007.17 980.87 1010.50 979.71 1015.00 979.00C1019.50 978.29 1024.17 977.92 1030.00 977.25C1035.83 976.58 1044.17 975.62 1050.00 975.00C1055.83 974.38 1059.17 974.18 1065.00 973.50C1070.83 972.82 1075.33 971.98 1085.00 970.90C1094.67 969.82 1112.50 967.73 1123.00 967.00C1133.50 966.27 1137.67 966.68 1148.00 966.50C1158.33 966.32 1173.00 966.02 1185.00 965.90C1197.00 965.78 1168.90 965.70 1220.00 965.80C1271.10 965.90 1446.33 966.38 1491.60 966.50" fill="none" stroke="#6dbb44" stroke-width="3.2" stroke-linejoin="round"/><rect x="1485" y="837" width="6.4" height="145.6" fill="#c8d0da" opacity="0.45"/><rect x="1491.2" y="837" width="1" height="145.6" fill="#c3c6cc"/><rect x="1492.2" y="837" width="6" height="145.6" fill="#eceff2"/><g transform="translate(689.7 982.5)"><circle r="7.2" fill="#fff"/><path d="M-5.07 -1.85A5.4 5.4 0 0 1 4.14 -3.47" fill="none" stroke="#e94235" stroke-width="2.4"/><path d="M-5.07 1.85A5.4 5.4 0 0 1 -5.07 -1.85" fill="none" stroke="#fabb05" stroke-width="2.4"/><path d="M4.14 3.47A5.4 5.4 0 0 1 -5.07 1.85" fill="none" stroke="#34a853" stroke-width="2.4"/><path d="M5.40 0.00A5.4 5.4 0 0 1 4.14 3.47" fill="none" stroke="#4285f4" stroke-width="2.4"/><path d="M0.2 0H5.9" stroke="#4285f4" stroke-width="2.4"/></g><g transform="translate(722.8 982.5)"><circle r="7.2" fill="#fff"/><path d="M-5.07 -1.85A5.4 5.4 0 0 1 4.14 -3.47" fill="none" stroke="#e94235" stroke-width="2.4"/><path d="M-5.07 1.85A5.4 5.4 0 0 1 -5.07 -1.85" fill="none" stroke="#fabb05" stroke-width="2.4"/><path d="M4.14 3.47A5.4 5.4 0 0 1 -5.07 1.85" fill="none" stroke="#34a853" stroke-width="2.4"/><path d="M5.40 0.00A5.4 5.4 0 0 1 4.14 3.47" fill="none" stroke="#4285f4" stroke-width="2.4"/><path d="M0.2 0H5.9" stroke="#4285f4" stroke-width="2.4"/></g><path d="M755 975.5H767V985.8H759.6L755 988.6Z" fill="#dc3d36" stroke="#ffffff" stroke-width="0.7" stroke-linejoin="round"/><g transform="translate(765.7 982.5)"><circle r="7.2" fill="#fff"/><path d="M-5.07 -1.85A5.4 5.4 0 0 1 4.14 -3.47" fill="none" stroke="#e94235" stroke-width="2.4"/><path d="M-5.07 1.85A5.4 5.4 0 0 1 -5.07 -1.85" fill="none" stroke="#fabb05" stroke-width="2.4"/><path d="M4.14 3.47A5.4 5.4 0 0 1 -5.07 1.85" fill="none" stroke="#34a853" stroke-width="2.4"/><path d="M5.40 0.00A5.4 5.4 0 0 1 4.14 3.47" fill="none" stroke="#4285f4" stroke-width="2.4"/><path d="M0.2 0H5.9" stroke="#4285f4" stroke-width="2.4"/></g><path d="M788.75 975.5H800.75V985.8H793.35L788.75 988.6Z" fill="#dc3d36" stroke="#ffffff" stroke-width="0.7" stroke-linejoin="round"/><path d="M798.2 975.5H810.2V985.8H802.8000000000001L798.2 988.6Z" fill="#dc3d36" stroke="#ffffff" stroke-width="0.7" stroke-linejoin="round"/><path d="M817 975.5H829V985.8H821.6L817 988.6Z" fill="#dc3d36" stroke="#ffffff" stroke-width="0.7" stroke-linejoin="round"/><path d="M831.6 975.5H843.6V985.8H836.2L831.6 988.6Z" fill="#dc3d36" stroke="#ffffff" stroke-width="0.7" stroke-linejoin="round"/><g transform="translate(889.6 982.5)"><circle r="7.2" fill="#fff"/><path d="M-5.07 -1.85A5.4 5.4 0 0 1 4.14 -3.47" fill="none" stroke="#e94235" stroke-width="2.4"/><path d="M-5.07 1.85A5.4 5.4 0 0 1 -5.07 -1.85" fill="none" stroke="#fabb05" stroke-width="2.4"/><path d="M4.14 3.47A5.4 5.4 0 0 1 -5.07 1.85" fill="none" stroke="#34a853" stroke-width="2.4"/><path d="M5.40 0.00A5.4 5.4 0 0 1 4.14 3.47" fill="none" stroke="#4285f4" stroke-width="2.4"/><path d="M0.2 0H5.9" stroke="#4285f4" stroke-width="2.4"/></g><path d="M888.9 975.5H900.9V985.8H893.5L888.9 988.6Z" fill="#dc3d36" stroke="#ffffff" stroke-width="0.7" stroke-linejoin="round"/><g transform="translate(928.3 982.5)"><circle r="7.2" fill="#fff"/><path d="M-5.07 -1.85A5.4 5.4 0 0 1 4.14 -3.47" fill="none" stroke="#e94235" stroke-width="2.4"/><path d="M-5.07 1.85A5.4 5.4 0 0 1 -5.07 -1.85" fill="none" stroke="#fabb05" stroke-width="2.4"/><path d="M4.14 3.47A5.4 5.4 0 0 1 -5.07 1.85" fill="none" stroke="#34a853" stroke-width="2.4"/><path d="M5.40 0.00A5.4 5.4 0 0 1 4.14 3.47" fill="none" stroke="#4285f4" stroke-width="2.4"/><path d="M0.2 0H5.9" stroke="#4285f4" stroke-width="2.4"/></g><path d="M950.8 975.5H962.8V985.8H955.4L950.8 988.6Z" fill="#dc3d36" stroke="#ffffff" stroke-width="0.7" stroke-linejoin="round"/><path d="M988.7 975.5H1000.7V985.8H993.3000000000001L988.7 988.6Z" fill="#dc3d36" stroke="#ffffff" stroke-width="0.7" stroke-linejoin="round"/><path d="M1012.7 975.5H1024.7V985.8H1017.3000000000001L1012.7 988.6Z" fill="#dc3d36" stroke="#ffffff" stroke-width="0.7" stroke-linejoin="round"/><path d="M1055.9 975.5H1067.9V985.8H1060.5L1055.9 988.6Z" fill="#dc3d36" stroke="#ffffff" stroke-width="0.7" stroke-linejoin="round"/><path d="M1070.3 975.5H1082.3V985.8H1074.8999999999999L1070.3 988.6Z" fill="#dc3d36" stroke="#ffffff" stroke-width="0.7" stroke-linejoin="round"/><path d="M1080 975.5H1092V985.8H1084.6L1080 988.6Z" fill="#dc3d36" stroke="#ffffff" stroke-width="0.7" stroke-linejoin="round"/><path d="M1127.6 975.5H1139.6V985.8H1132.1999999999998L1127.6 988.6Z" fill="#dc3d36" stroke="#ffffff" stroke-width="0.7" stroke-linejoin="round"/><path d="M1156.2 975.5H1168.2V985.8H1160.8L1156.2 988.6Z" fill="#dc3d36" stroke="#ffffff" stroke-width="0.7" stroke-linejoin="round"/><path d="M1189.5 975.5H1201.5V985.8H1194.1L1189.5 988.6Z" fill="#dc3d36" stroke="#ffffff" stroke-width="0.7" stroke-linejoin="round"/><path d="M1227.9 975.5H1239.9V985.8H1232.5L1227.9 988.6Z" fill="#dc3d36" stroke="#ffffff" stroke-width="0.7" stroke-linejoin="round"/><path d="M1256.4 975.5H1268.4V985.8H1261.0L1256.4 988.6Z" fill="#dc3d36" stroke="#ffffff" stroke-width="0.7" stroke-linejoin="round"/><path d="M1280.4 975.5H1292.4V985.8H1285.0L1280.4 988.6Z" fill="#dc3d36" stroke="#ffffff" stroke-width="0.7" stroke-linejoin="round"/><path d="M1318.5 975.5H1330.5V985.8H1323.1L1318.5 988.6Z" fill="#dc3d36" stroke="#ffffff" stroke-width="0.7" stroke-linejoin="round"/><path d="M1356.9 975.5H1368.9V985.8H1361.5L1356.9 988.6Z" fill="#dc3d36" stroke="#ffffff" stroke-width="0.7" stroke-linejoin="round"/><path d="M1385.4 975.5H1397.4V985.8H1390.0L1385.4 988.6Z" fill="#dc3d36" stroke="#ffffff" stroke-width="0.7" stroke-linejoin="round"/><path d="M1423.9 975.5H1435.9V985.8H1428.5L1423.9 988.6Z" fill="#dc3d36" stroke="#ffffff" stroke-width="0.7" stroke-linejoin="round"/><path d="M1447.9 975.5H1459.9V985.8H1452.5L1447.9 988.6Z" fill="#dc3d36" stroke="#ffffff" stroke-width="0.7" stroke-linejoin="round"/><path d="M1461.9 975.5H1473.9V985.8H1466.5L1461.9 988.6Z" fill="#dc3d36" stroke="#ffffff" stroke-width="0.7" stroke-linejoin="round"/></svg>
<div class=tl><span class=t style="left:10.60px;top:15px;font-size:21px;color:#191b23;-webkit-text-stroke:0.45px currentColor;letter-spacing:0.164px;">Overview</span><span class=t style="left:120.40px;top:15px;font-size:21px;color:#191b23;-webkit-text-stroke:0.45px currentColor;letter-spacing:0.116px;">Compare domains</span><span class=t style="left:313.20px;top:15px;font-size:21px;color:#191b23;-webkit-text-stroke:0.45px currentColor;letter-spacing:0.396px;">Growth report</span><span class=t style="left:466.50px;top:15px;font-size:21px;color:#191b23;-webkit-text-stroke:0.45px currentColor;letter-spacing:0.254px;">Compare by countries</span><span class=t style="left:36.20px;top:94px;font-size:18px;color:#191b23;-webkit-text-stroke:0.25px currentColor;letter-spacing:0.275px;">Authority Score</span><span class=t style="left:75.71px;top:121px;font-size:32px;color:#3d8bee;font-weight:700;transform:scaleX(1.0859);transform-origin:0 0;">86</span><span class=t style="left:36.20px;top:187px;font-size:15.25px;color:#191b23;-webkit-text-stroke:0.25px currentColor;letter-spacing:-0.029px;">Semrush Domain Rank</span><span class=t style="left:203.40px;top:187px;font-size:15.25px;color:#2170cf;-webkit-text-stroke:0.25px currentColor;letter-spacing:-0.031px;">128</span><span class=t style="left:295.00px;top:94px;font-size:18px;color:#191b23;-webkit-text-stroke:0.25px currentColor;letter-spacing:0.152px;">Organic Search Traffic</span><span class=t style="left:294.55px;top:122px;font-size:32px;color:#3d8bee;font-weight:700;transform:scaleX(1.0477);transform-origin:0 0;">20.2M</span><span class=t style="left:393.02px;top:136px;font-size:15.5px;color:#cf2a3a;-webkit-text-stroke:0.25px currentColor;transform:scaleX(0.9200);transform-origin:0 0;">-1.9%</span><span class=t style="left:294.00px;top:167px;font-size:15.25px;color:#191b23;-webkit-text-stroke:0.25px currentColor;letter-spacing:0.131px;">Keywords</span><span class=t style="left:373.06px;top:167px;font-size:15.25px;color:#2170cf;-webkit-text-stroke:0.25px currentColor;transform:scaleX(0.9368);transform-origin:0 0;">1M</span><span class=t style="left:603.00px;top:94px;font-size:18px;color:#191b23;-webkit-text-stroke:0.25px currentColor;letter-spacing:0.168px;">Paid Search Traffic</span><span class=t style="left:604.00px;top:122px;font-size:32px;color:#3d8bee;font-weight:700;transform:scaleX(1.0283);transform-origin:0 0;">448.2K</span><span class=t style="left:716.47px;top:136px;font-size:15.5px;color:#cf2a3a;-webkit-text-stroke:0.25px currentColor;transform:scaleX(0.9200);transform-origin:0 0;">-7.4%</span><span class=t style="left:603.00px;top:187px;font-size:15.25px;color:#191b23;-webkit-text-stroke:0.25px currentColor;letter-spacing:0.131px;">Keywords</span><span class=t style="left:681.97px;top:187px;font-size:15.25px;color:#2170cf;-webkit-text-stroke:0.25px currentColor;transform:scaleX(0.9200);transform-origin:0 0;">2.1K</span><span class=t style="left:824.00px;top:94px;font-size:18px;color:#191b23;-webkit-text-stroke:0.25px currentColor;letter-spacing:0.072px;">Backlinks</span><span class=t style="left:823.03px;top:122px;font-size:32px;color:#3d8bee;font-weight:700;transform:scaleX(0.9850);transform-origin:0 0;">12.7M</span><span class=t style="left:824.00px;top:187px;font-size:15.25px;color:#191b23;-webkit-text-stroke:0.25px currentColor;letter-spacing:0.062px;">Referring Domains</span><span class=t style="left:962.79px;top:187px;font-size:15.25px;color:#2170cf;-webkit-text-stroke:0.25px currentColor;transform:scaleX(0.9635);transform-origin:0 0;">115.5K</span><span class=t style="left:35.60px;top:242px;font-size:15.5px;color:#191b23;-webkit-text-stroke:0.25px currentColor;letter-spacing:0.118px;">Engagement metrics</span><span class=t style="left:221.25px;top:242px;font-size:15.5px;color:#6c6e79;-webkit-text-stroke:0.25px currentColor;letter-spacing:0.171px;">June 2023</span><span class=t style="left:336.20px;top:242px;font-size:15.5px;color:#191b23;-webkit-text-stroke:0.25px currentColor;letter-spacing:0.095px;">Pages/Visits</span><span class=t style="left:429.00px;top:242px;font-size:15.5px;color:#2170cf;-webkit-text-stroke:0.25px currentColor;letter-spacing:-0.266px;">2.75</span><span class=t style="left:498.40px;top:242px;font-size:15.5px;color:#191b23;-webkit-text-stroke:0.25px currentColor;letter-spacing:0.071px;">Avg. Visit Duration</span><span class=t style="left:631.90px;top:242px;font-size:15.5px;color:#2170cf;-webkit-text-stroke:0.25px currentColor;letter-spacing:0.546px;">06:49</span><span class=t style="left:711.60px;top:242px;font-size:15.5px;color:#191b23;-webkit-text-stroke:0.25px currentColor;letter-spacing:0.244px;">Bounce rate</span><span class=t style="left:802.40px;top:242px;font-size:15.5px;color:#2170cf;-webkit-text-stroke:0.25px currentColor;letter-spacing:-0.238px;">52.98%</span><span class=t style="left:915.70px;top:242px;font-size:15.5px;color:#2170cf;-webkit-text-stroke:0.25px currentColor;letter-spacing:-0.063px;">Show all</span><span class=t style="left:46.90px;top:328px;font-size:18px;color:#191b23;-webkit-text-stroke:0.25px currentColor;letter-spacing:-0.038px;">Organic</span><span class=t style="left:130.25px;top:328px;font-size:18px;color:#191b23;-webkit-text-stroke:0.25px currentColor;letter-spacing:-0.189px;">Paid</span><span class=t style="left:35.63px;top:383px;font-size:21px;color:#191b23;font-weight:700;-webkit-text-stroke:0.35px currentColor;transform:scaleX(0.9675);transform-origin:0 0;">Distribution by Country</span><span class=t style="left:36.60px;top:435px;font-size:15.5px;color:#191b23;-webkit-text-stroke:0.25px currentColor;letter-spacing:-0.011px;">Countries</span><span class=t style="left:289.30px;top:435px;font-size:15.5px;color:#191b23;-webkit-text-stroke:0.25px currentColor;letter-spacing:0.104px;">Traffic Share</span><span class=t style="left:423.80px;top:435px;font-size:15.5px;color:#191b23;-webkit-text-stroke:0.25px currentColor;letter-spacing:0.225px;">Traffic</span><span class=t style="left:503.40px;top:435px;font-size:15.5px;color:#191b23;-webkit-text-stroke:0.25px currentColor;letter-spacing:-0.015px;">Keywords</span><span class=t style="left:36.60px;top:477px;font-size:17.5px;color:#191b23;-webkit-text-stroke:0.25px currentColor;letter-spacing:0.532px;">Worldwide</span><span class=t style="left:334.20px;top:477px;font-size:17.5px;color:#6c6e79;-webkit-text-stroke:0.25px currentColor;letter-spacing:-0.299px;">100%</span><span class=t style="left:416.60px;top:477px;font-size:17.5px;color:#191b23;-webkit-text-stroke:0.25px currentColor;letter-spacing:0.735px;">23.9M</span><span class=t style="left:532.80px;top:477px;font-size:17.5px;color:#191b23;-webkit-text-stroke:0.25px currentColor;letter-spacing:0.258px;">1.4M</span><span class=t style="left:65.00px;top:523px;font-size:17.5px;color:#191b23;-webkit-text-stroke:0.25px currentColor;letter-spacing:0.062px;">US</span><span class=t style="left:343.50px;top:523px;font-size:17.5px;color:#6c6e79;-webkit-text-stroke:0.25px currentColor;letter-spacing:-0.233px;">85%</span><span class=t style="left:416.60px;top:523px;font-size:17.5px;color:#2170cf;-webkit-text-stroke:0.25px currentColor;letter-spacing:0.735px;">20.2M</span><span class=t style="left:548.00px;top:523px;font-size:17.5px;color:#2170cf;-webkit-text-stroke:0.25px currentColor;letter-spacing:0.167px;">1M</span><span class=t style="left:65.00px;top:569px;font-size:17.5px;color:#191b23;-webkit-text-stroke:0.25px currentColor;letter-spacing:0.638px;">IN</span><span class=t style="left:340.87px;top:569px;font-size:17.5px;color:#6c6e79;-webkit-text-stroke:0.25px currentColor;transform:scaleX(0.9314);transform-origin:0 0;">1.9%</span><span class=t style="left:413.50px;top:569px;font-size:17.5px;color:#2170cf;-webkit-text-stroke:0.25px currentColor;transform:scaleX(0.9697);transform-origin:0 0;">464.1K</span><span class=t style="left:524.60px;top:569px;font-size:17.5px;color:#2170cf;-webkit-text-stroke:0.25px currentColor;letter-spacing:0.310px;">23.4K</span><span class=t style="left:65.00px;top:615px;font-size:17.5px;color:#191b23;-webkit-text-stroke:0.25px currentColor;letter-spacing:0.028px;">PH</span><span class=t style="left:341.35px;top:615px;font-size:17.5px;color:#6c6e79;-webkit-text-stroke:0.25px currentColor;transform:scaleX(0.9200);transform-origin:0 0;">1.5%</span><span class=t style="left:409.70px;top:615px;font-size:17.5px;color:#2170cf;-webkit-text-stroke:0.25px currentColor;letter-spacing:0.421px;">348.8K</span><span class=t style="left:529.66px;top:615px;font-size:17.5px;color:#2170cf;-webkit-text-stroke:0.25px currentColor;transform:scaleX(0.9200);transform-origin:0 0;">29.1K</span><span class=t style="left:36.60px;top:661px;font-size:17.5px;color:#191b23;-webkit-text-stroke:0.25px currentColor;letter-spacing:0.265px;">Other</span><span class=t style="left:345.16px;top:661px;font-size:17.5px;color:#6c6e79;-webkit-text-stroke:0.25px currentColor;transform:scaleX(0.9383);transform-origin:0 0;">12%</span><span class=t style="left:427.60px;top:661px;font-size:17.5px;color:#191b23;-webkit-text-stroke:0.25px currentColor;letter-spacing:0.558px;">2.9M</span><span class=t style="left:515.90px;top:661px;font-size:17.5px;color:#191b23;-webkit-text-stroke:0.25px currentColor;letter-spacing:0.041px;">378.9K</span><span class=t style="left:46.90px;top:721px;font-size:18px;color:#ffffff;font-weight:700;transform:scaleX(0.9614);transform-origin:0 0;">Compare</span><span class=t style="left:36.50px;top:791px;font-size:21px;color:#191b23;font-weight:700;-webkit-text-stroke:0.35px currentColor;transform:scaleX(0.9424);transform-origin:0 0;">SERP features</span><span class=t style="left:35.80px;top:841px;font-size:15px;color:#6c6e79;-webkit-text-stroke:0.25px currentColor;transform:scaleX(0.9769);transform-origin:0 0;">24%</span><span class=t style="left:36.76px;top:879px;font-size:15px;color:#6c6e79;-webkit-text-stroke:0.25px currentColor;transform:scaleX(0.9448);transform-origin:0 0;">12%</span><span class=t style="left:45.00px;top:918px;font-size:15px;color:#6c6e79;-webkit-text-stroke:0.25px currentColor;transform:scaleX(0.9277);transform-origin:0 0;">0%</span><span class=t style="left:47.00px;top:992px;font-size:18.5px;color:#ffffff;font-weight:700;transform:scaleX(0.9472);transform-origin:0 0;">View full report</span><span class=t style="left:631.31px;top:327px;font-size:18px;color:#191b23;-webkit-text-stroke:0.25px currentColor;transform:scaleX(0.9865);transform-origin:0 0;">1M</span><span class=t style="left:676.70px;top:327px;font-size:18px;color:#191b23;-webkit-text-stroke:0.25px currentColor;letter-spacing:0.689px;">6M</span><span class=t style="left:722.62px;top:327px;font-size:18px;color:#191b23;-webkit-text-stroke:0.25px currentColor;transform:scaleX(0.9200);transform-origin:0 0;">1Y</span><span class=t style="left:765.00px;top:327px;font-size:18px;color:#191b23;-webkit-text-stroke:0.25px currentColor;transform:scaleX(0.9632);transform-origin:0 0;">2Y</span><span class=t style="left:807.30px;top:327px;font-size:18px;color:#191b23;-webkit-text-stroke:0.25px currentColor;letter-spacing:0.243px;">All time</span><span class=t style="left:1518.10px;top:327px;font-size:18px;color:#5e6170;-webkit-text-stroke:0.25px currentColor;letter-spacing:0.456px;">Export</span><span class=t style="left:632.70px;top:383px;font-size:21px;color:#191b23;font-weight:700;-webkit-text-stroke:0.35px currentColor;transform:scaleX(0.9675);transform-origin:0 0;">Organic Traffic</span><span class=t style="left:782.60px;top:383px;font-size:21px;color:#6c6e79;-webkit-text-stroke:0.25px currentColor;letter-spacing:0.738px;">20,217,576/month</span><span class=t style="left:657.80px;top:436px;font-size:18px;color:#191b23;-webkit-text-stroke:0.25px currentColor;letter-spacing:0.205px;">Organic Traffic</span><span class=t style="left:823.00px;top:436px;font-size:18px;color:#191b23;-webkit-text-stroke:0.25px currentColor;letter-spacing:0.270px;">Paid Traffic</span><span class=t style="left:982.00px;top:436px;font-size:18px;color:#191b23;-webkit-text-stroke:0.25px currentColor;letter-spacing:0.320px;">Notes</span><span class=t style="left:1512.20px;top:484px;font-size:15px;color:#6c6e79;-webkit-text-stroke:0.25px currentColor;letter-spacing:-0.249px;">21.9M</span><span class=t style="left:1511.20px;top:520px;font-size:15px;color:#6c6e79;-webkit-text-stroke:0.25px currentColor;">16.5M</span><span class=t style="left:1511.23px;top:557px;font-size:15px;color:#6c6e79;-webkit-text-stroke:0.25px currentColor;transform:scaleX(0.9710);transform-origin:0 0;">11M</span><span class=t style="left:1512.20px;top:593px;font-size:15px;color:#6c6e79;-webkit-text-stroke:0.25px currentColor;letter-spacing:0.216px;">5.5M</span><span class=t style="left:1512.20px;top:629px;font-size:15px;color:#6c6e79;-webkit-text-stroke:0.25px currentColor;">0</span><span class=t style="left:690.70px;top:658px;font-size:15px;color:#6c6e79;-webkit-text-stroke:0.25px currentColor;letter-spacing:-0.229px;">Feb 1</span><span class=t style="left:690.70px;top:1002px;font-size:15px;color:#6c6e79;-webkit-text-stroke:0.25px currentColor;letter-spacing:-0.229px;">Feb 1</span><span class=t style="left:823.90px;top:658px;font-size:15px;color:#6c6e79;-webkit-text-stroke:0.25px currentColor;letter-spacing:-0.050px;">Mar 1</span><span class=t style="left:823.90px;top:1002px;font-size:15px;color:#6c6e79;-webkit-text-stroke:0.25px currentColor;letter-spacing:-0.050px;">Mar 1</span><span class=t style="left:974.30px;top:658px;font-size:15px;color:#6c6e79;-webkit-text-stroke:0.25px currentColor;transform:scaleX(0.9575);transform-origin:0 0;">Apr 1</span><span class=t style="left:974.30px;top:1002px;font-size:15px;color:#6c6e79;-webkit-text-stroke:0.25px currentColor;transform:scaleX(0.9575);transform-origin:0 0;">Apr 1</span><span class=t style="left:1113.60px;top:658px;font-size:15px;color:#6c6e79;-webkit-text-stroke:0.25px currentColor;letter-spacing:-0.026px;">May 1</span><span class=t style="left:1113.60px;top:1002px;font-size:15px;color:#6c6e79;-webkit-text-stroke:0.25px currentColor;letter-spacing:-0.026px;">May 1</span><span class=t style="left:1264.70px;top:658px;font-size:15px;color:#6c6e79;-webkit-text-stroke:0.25px currentColor;letter-spacing:-0.188px;">Jun 1</span><span class=t style="left:1264.70px;top:1002px;font-size:15px;color:#6c6e79;-webkit-text-stroke:0.25px currentColor;letter-spacing:-0.188px;">Jun 1</span><span class=t style="left:1411.00px;top:658px;font-size:15px;color:#6c6e79;-webkit-text-stroke:0.25px currentColor;transform:scaleX(0.9540);transform-origin:0 0;">Jul 1</span><span class=t style="left:1411.00px;top:1002px;font-size:15px;color:#6c6e79;-webkit-text-stroke:0.25px currentColor;transform:scaleX(0.9540);transform-origin:0 0;">Jul 1</span><span class=t style="left:632.40px;top:727px;font-size:21px;color:#191b23;font-weight:700;-webkit-text-stroke:0.35px currentColor;transform:scaleX(0.9569);transform-origin:0 0;">Organic Keywords</span><span class=t style="left:815.70px;top:727px;font-size:21px;color:#6c6e79;-webkit-text-stroke:0.25px currentColor;letter-spacing:0.669px;">1,004,421</span><span class=t style="left:658.00px;top:781px;font-size:18px;color:#191b23;-webkit-text-stroke:0.25px currentColor;letter-spacing:0.169px;">Top 3</span><span class=t style="left:749.00px;top:781px;font-size:18px;color:#191b23;-webkit-text-stroke:0.25px currentColor;letter-spacing:0.195px;">4-10</span><span class=t style="left:830.40px;top:781px;font-size:18px;color:#191b23;-webkit-text-stroke:0.25px currentColor;letter-spacing:0.052px;">11-20</span><span class=t style="left:921.70px;top:781px;font-size:18px;color:#191b23;-webkit-text-stroke:0.25px currentColor;letter-spacing:0.068px;">21-50</span><span class=t style="left:1013.80px;top:781px;font-size:18px;color:#191b23;-webkit-text-stroke:0.25px currentColor;letter-spacing:-0.087px;">51-100</span><span class=t style="left:1115.30px;top:781px;font-size:18px;color:#191b23;-webkit-text-stroke:0.25px currentColor;transform:scaleX(0.9668);transform-origin:0 0;">SERP features</span><span class=t style="left:1511.03px;top:828px;font-size:15px;color:#6c6e79;-webkit-text-stroke:0.25px currentColor;transform:scaleX(0.9668);transform-origin:0 0;">1M</span><span class=t style="left:1512.00px;top:865px;font-size:15px;color:#6c6e79;-webkit-text-stroke:0.25px currentColor;letter-spacing:0.153px;">754.8K</span><span class=t style="left:1512.00px;top:901px;font-size:15px;color:#6c6e79;-webkit-text-stroke:0.25px currentColor;letter-spacing:0.353px;">503.2K</span><span class=t style="left:1512.00px;top:938px;font-size:15px;color:#6c6e79;-webkit-text-stroke:0.25px currentColor;letter-spacing:-0.267px;">251.6K</span><span class=t style="left:1512.00px;top:974px;font-size:15px;color:#6c6e79;-webkit-text-stroke:0.25px currentColor;">0</span>
<span class=t style="left:971.5px;top:606.5px;font-size:15.5px;color:#65676f;transform-origin:0 0;transform:rotate(-90deg);line-height:1;">SERP features</span></div>
</body></html>
